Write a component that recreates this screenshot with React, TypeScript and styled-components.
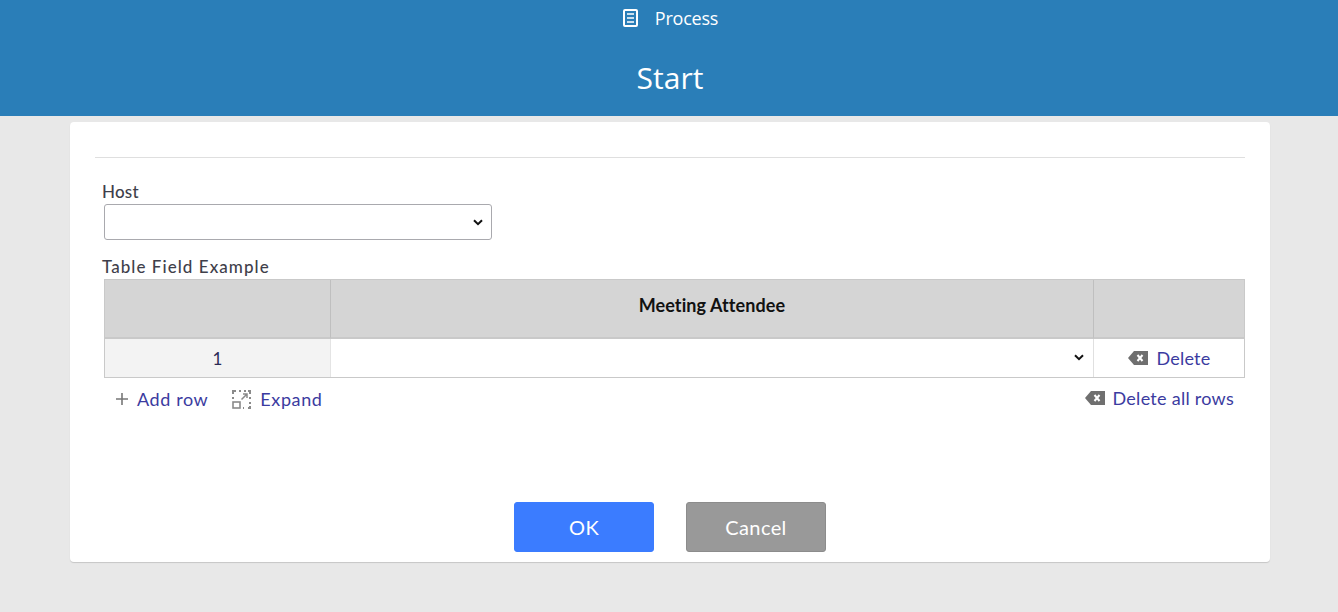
import React from "react";
import styled, { createGlobalStyle } from "styled-components";

const Global = createGlobalStyle`
  html, body { margin: 0; padding: 0; background: #e8e8e8; }
  body { font-family: "Lato", "Liberation Sans", sans-serif; overflow: hidden; }
`;
const Page = styled.div`
  width: 1338px;
  height: 612px;
  background: #e8e8e8;
`;
const Header = styled.header`
  height: 116px;
  background: #2a7eb8;
  color: #fff;
  font-family: "Open Sans", sans-serif;
  text-align: center;
`;
const ProcessLine = styled.div`
  height: 36px;
  display: flex;
  justify-content: center;
  align-items: center;
  gap: 17px;
  font-size: 18px;
  letter-spacing: -0.2px;
  padding-left: 3px;
`;
const Title = styled.h1`
  margin: 0;
  padding: 20px 0 0 2px;
  font-size: 30px;
  line-height: 43px;
  font-weight: 400;
`;
const Card = styled.main`
  width: 1200px;
  height: 440px;
  box-sizing: border-box;
  margin: 6px 0 0 70px;
  padding: 35px 25px 0;
  background: #fff;
  border-radius: 4px;
  box-shadow: 0 1px 1px rgba(0, 0, 0, 0.15);
  display: flex;
  flex-direction: column;
`;
const Divider = styled.hr`
  margin: 0;
  border: 0;
  border-top: 1px solid #dfdfdf;
`;
const FieldLabel = styled.label<{ $top: number; $spacing?: number }>`
  display: block;
  margin: ${(p) => p.$top}px 0 0 7px;
  font-size: 17px;
  line-height: 20px;
  font-weight: 500;
  color: #3f3f4b;
  height: 20px;
  letter-spacing: ${(p) => p.$spacing ?? 0.2}px;
`;
const Select = styled.div`
  width: 388px;
  height: 36px;
  box-sizing: border-box;
  margin: 2px 0 0 9px;
  border: 1px solid #a9a9ae;
  border-radius: 3px;
  display: flex;
  align-items: center;
  justify-content: flex-end;
  padding-right: 8px;
`;
const Table = styled.div`
  width: 1141px;
  height: 99px;
  box-sizing: border-box;
  margin: 2px 0 0 9px;
  border: 1px solid #c9c9c9;
  display: grid;
  grid-template-columns: 226px 763px 1fr;
  grid-template-rows: 59px 1fr;
`;
const HeadCell = styled.div<{ $last?: boolean }>`
  background: #d5d5d5;
  border-right: ${(p) => (p.$last ? "0" : "1px solid #bfbfbf")};
  border-bottom: 2px solid #c9c9c9;
  display: flex;
  align-items: center;
  justify-content: center;
  padding-bottom: 7px;
  box-sizing: border-box;
  font-size: 18px;
  font-weight: 700;
  letter-spacing: 0.1px;
  color: #111;
`;
const IndexCell = styled.div`
  background: #f3f3f3;
  border-right: 1px solid #e4e4e4;
  display: flex;
  align-items: center;
  justify-content: center;
  font-size: 17px;
  color: #2b2b55;
`;
const InputCell = styled.div`
  border-right: 1px solid #e0e0e0;
  display: flex;
  align-items: center;
  justify-content: flex-end;
  padding-right: 9px;
  padding-bottom: 2px;
`;
const ActionCell = styled.div`
  display: flex;
  align-items: center;
  justify-content: center;
  gap: 9px;
`;
const LinkText = styled.span<{ $spacing?: number }>`
  color: #3b3ba0;
  font-size: 18px;
  line-height: 22px;
  letter-spacing: ${(p) => p.$spacing ?? 0.6}px;
`;
const Actions = styled.div`
  width: 1141px;
  margin: 10px 0 0 9px;
  display: flex;
  justify-content: space-between;
`;
const ActionGroup = styled.div<{ $pad: number }>`
  display: flex;
  align-items: center;
  gap: 24px;
  padding: ${(p) => `0 ${p.$pad}px`};
`;
const Action = styled.div<{ $gap: number; $shift?: number }>`
  display: flex;
  align-items: center;
  gap: ${(p) => p.$gap}px;
  margin-top: ${(p) => p.$shift ?? 0}px;
`;
const Buttons = styled.div`
  margin-top: 92px;
  display: flex;
  justify-content: center;
  gap: 32px;
`;
const Button = styled.button<{ $primary?: boolean }>`
  width: 140px;
  height: 50px;
  box-sizing: border-box;
  border-radius: 3px;
  border: 1px solid ${(p) => (p.$primary ? "#3b7cff" : "#8c8c8c")};
  background: ${(p) => (p.$primary ? "#3b7cff" : "#999999")};
  color: #fff;
  font-family: inherit;
  font-size: 20px;
  letter-spacing: 0.4px;
`;

const Chevron = () => (
  <svg width="10" height="7" viewBox="0 0 10 7">
    <path d="M1 1.2 5 5.2 9 1.2" fill="none" stroke="#111" strokeWidth="2" />
  </svg>
);
const Backspace = () => (
  <svg width="20" height="14" viewBox="0 0 20 14">
    <path d="M6 0h14v14H6L0 7z" fill="#6f6f6f" />
    <path d="M9.5 4l5 6M14.5 4l-5 6" stroke="#fff" strokeWidth="2" />
  </svg>
);
const DocIcon = () => (
  <svg width="15" height="18" viewBox="0 0 15 18">
    <rect x="1" y="1" width="13" height="16" rx="1" fill="none" stroke="#fff" strokeWidth="2" />
    <path d="M4 5h7M4 9h7M4 13h7" stroke="#fff" strokeWidth="1.6" />
  </svg>
);
const Plus = () => (
  <svg width="12" height="12" viewBox="0 0 12 12">
    <path d="M6 0v12M0 6h12" stroke="#777" strokeWidth="1.6" />
  </svg>
);
const ExpandIcon = () => (
  <svg width="19" height="19" viewBox="0 0 19 19" fill="none">
    <path d="M1 4V1h3M7 1h2M12 1h2M16 1h2v3M18 7v2M18 12v2M18 16v2h-2M12 18h-1M1 7v2" stroke="#8a8a8a" strokeWidth="2" />
    <rect x="1" y="12" width="7" height="6" stroke="#8a8a8a" strokeWidth="1.6" />
    <path d="M9.5 9.5l5-5M11 4h4v4" stroke="#8a8a8a" strokeWidth="1.5" />
  </svg>
);

export default function App() {
  return (
    <Page>
      <Global />
      <Header>
        <ProcessLine>
          <DocIcon />
          <span>Process</span>
        </ProcessLine>
        <Title>Start</Title>
      </Header>
      <Card>
        <Divider />
        <FieldLabel $top={24}>Host</FieldLabel>
        <Select><Chevron /></Select>
        <FieldLabel $top={17} $spacing={1.05}>Table Field Example</FieldLabel>
        <Table>
          <HeadCell />
          <HeadCell>Meeting Attendee</HeadCell>
          <HeadCell $last />
          <IndexCell>1</IndexCell>
          <InputCell><Chevron /></InputCell>
          <ActionCell>
            <Backspace />
            <LinkText $spacing={0.2}>Delete</LinkText>
          </ActionCell>
        </Table>
        <Actions>
          <ActionGroup $pad={12}>
            <Action $gap={9}><Plus /><LinkText>Add row</LinkText></Action>
            <Action $gap={9}><ExpandIcon /><LinkText>Expand</LinkText></Action>
          </ActionGroup>
          <ActionGroup $pad={11}>
            <Action $gap={8} $shift={-3}><Backspace /><LinkText $spacing={0.27}>Delete all rows</LinkText></Action>
          </ActionGroup>
        </Actions>
        <Buttons>
          <Button $primary>OK</Button>
          <Button>Cancel</Button>
        </Buttons>
      </Card>
    </Page>
  );
}
